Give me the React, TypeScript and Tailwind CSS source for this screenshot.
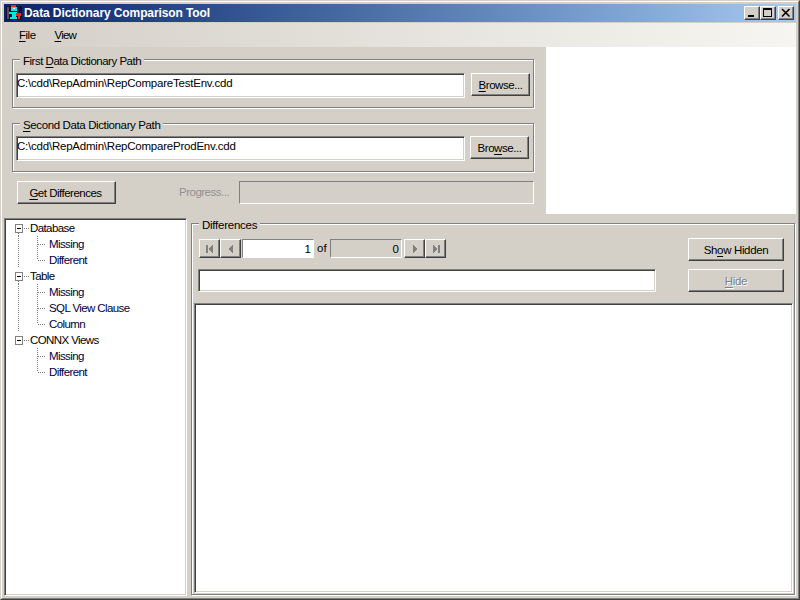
import React from "react";

const sunken = "border border-t-[#808080] border-l-[#808080] border-r-white border-b-white shadow-[inset_1px_1px_0_#404040,inset_-1px_-1px_0_#d4d0c8] bg-white";
const raised = "border border-t-white border-l-white border-r-[#404040] border-b-[#404040] shadow-[inset_-1px_-1px_0_#808080] bg-[#d4d0c8]";
const etchedFlat = "border border-t-[#808080] border-l-[#808080] border-r-white border-b-white bg-[#d4d0c8]";

function U({ children }: { children: React.ReactNode }) {
  return <span className="underline underline-offset-2">{children}</span>;
}

function Btn({ className, children, disabled }: { className: string; children: React.ReactNode; disabled?: boolean }) {
  return (
    <div className={`${raised} ${className} flex items-center justify-center ${disabled ? "text-[#808080] [text-shadow:1px_1px_0_#fff]" : "text-black"}`}>
      {children}
    </div>
  );
}

function Group({ className, label, children }: { className: string; label: React.ReactNode; children: React.ReactNode }) {
  return (
    <div className={`relative border border-[#808080] shadow-[1px_1px_0_#fff,inset_1px_1px_0_#fff] ${className}`}>
      <div className="absolute left-[7px] top-[-5px] bg-[#d4d0c8] px-[3px] h-[12px] leading-[12px] tracking-[-0.5px] whitespace-nowrap">{label}</div>
      {children}
    </div>
  );
}

function NavIcon({ kind }: { kind: "first" | "prev" | "next" | "last" }) {
  return (
    <svg width="10" height="10" viewBox="0 0 10 10" fill="#808080" shapeRendering="crispEdges">
      {kind === "first" && (<><rect x="1" y="1" width="2" height="8" /><path d="M8 1v8H7V8H6V7H5V6H4V4H5V3H6V2H7V1z" /></>)}
      {kind === "prev" && <path d="M7 1v8H6V8H5V7H4V6H3V4H4V3H5V2H6V1z" />}
      {kind === "next" && <path d="M3 1v8H4V8H5V7H6V6H7V4H6V3H5V2H4V1z" />}
      {kind === "last" && (<><rect x="7" y="1" width="2" height="8" /><path d="M2 1v8H3V8H4V7H5V6H6V4H5V3H4V2H3V1z" /></>)}
    </svg>
  );
}

function AppIcon() {
  return (
    <svg width="16" height="16" viewBox="0 0 16 16" shapeRendering="crispEdges" className="shrink-0">
      <rect x="0" y="1" width="16" height="14" fill="#101030" />
      <rect x="1" y="2" width="2" height="12" fill="#505060" />
      <rect x="5" y="0" width="5" height="2" fill="#ff2020" />
      <rect x="5" y="2" width="6" height="4" fill="#00e8e8" />
      <rect x="7" y="3" width="2" height="1" fill="#fff" />
      <rect x="3" y="7" width="8" height="2" fill="#00e8e8" />
      <rect x="6" y="9" width="4" height="3" fill="#00e8e8" />
      <rect x="4" y="12" width="7" height="2" fill="#00e8e8" />
      <rect x="10" y="8" width="5" height="3" fill="#ff2020" />
      <rect x="12" y="11" width="2" height="3" fill="#ff2020" />
    </svg>
  );
}

function RootRow({ label, line }: { label: string; line: boolean }) {
  return (
    <div className="flex h-4 items-center">
      <svg width="25" height="16" viewBox="0 0 25 16" className="shrink-0" shapeRendering="crispEdges">
        <rect x="10.5" y="4.5" width="7" height="8" fill="#fff" stroke="#808080" />
        <rect x="12" y="8" width="4" height="1" fill="#000" />
        <path d="M18.5 8.5H24" stroke="#808080" strokeDasharray="1 1" />
        {line && <path d="M13.5 13V16" stroke="#808080" strokeDasharray="1 1" />}
      </svg>
      <span className="leading-4 tracking-[-0.6px] whitespace-nowrap text-black">{label}</span>
    </div>
  );
}

function ChildRow({ label, last, outer }: { label: string; last: boolean; outer: boolean }) {
  return (
    <div className="flex h-4 items-center">
      <svg width="44" height="16" viewBox="0 0 44 16" className="shrink-0" shapeRendering="crispEdges">
        {outer && <path d="M13.5 0V16" stroke="#808080" strokeDasharray="1 1" />}
        <path d={last ? "M32.5 0V8" : "M32.5 0V16"} stroke="#808080" strokeDasharray="1 1" />
        <path d="M33 8.5H40" stroke="#808080" strokeDasharray="1 1" />
      </svg>
      <span className="leading-4 tracking-[-0.6px] whitespace-nowrap text-[#000040]">{label}</span>
    </div>
  );
}

export default function App() {
  return (
    <div className="w-[800px] h-[600px] overflow-hidden border border-t-[#d4d0c8] border-l-[#d4d0c8] border-r-[#404040] border-b-[#404040] bg-[#d4d0c8] text-[11.5px] text-black" style={{ fontFamily: '"Liberation Sans", Arial, sans-serif' }}>
      <div className="h-full border border-t-white border-l-white border-r-[#808080] border-b-[#808080] p-[2px] flex flex-col">
        {/* Title bar */}
        <div className="h-[18px] shrink-0 flex items-center pl-[2px] bg-gradient-to-r from-[#0a246a] to-[#a6caf0]">
          <AppIcon />
          <span className="ml-[2px] text-white font-bold text-[12px] tracking-[-0.1px] whitespace-nowrap">Data Dictionary Comparison Tool</span>
          <div className="ml-auto flex mr-[2px]">
            <Btn className="w-[16px] h-[14px]">
              <svg width="10" height="10" viewBox="0 0 10 10" shapeRendering="crispEdges"><rect x="1" y="7" width="6" height="2" fill="#000" /></svg>
            </Btn>
            <Btn className="w-[16px] h-[14px]">
              <svg width="10" height="10" viewBox="0 0 10 10" shapeRendering="crispEdges"><path d="M0 0H9V9H0z M1 2V8H8V2z" fillRule="evenodd" fill="#000" /></svg>
            </Btn>
            <Btn className="w-[16px] h-[14px] ml-[2px]">
              <svg width="10" height="10" viewBox="0 0 10 10"><path d="M1 1L8.5 8.5M8.5 1L1 8.5" stroke="#000" strokeWidth="1.6" fill="none" /></svg>
            </Btn>
          </div>
        </div>
        {/* Menu */}
        <div className="mt-[1px] h-[24px] pt-[1px] shrink-0 flex items-center pl-[15px] gap-[19px] bg-gradient-to-r from-[#d4d0c8] to-[#f6f5f1]">
          <span className="tracking-[-0.5px]"><U>F</U>ile</span>
          <span className="tracking-[-0.8px]"><U>V</U>iew</span>
        </div>
        {/* Top section */}
        <div className="h-[167px] shrink-0 flex">
          <div className="w-[542px] shrink-0 pl-[8px] pt-[12px]">
            <Group className="w-[522px] h-[49px] pl-[3px] pt-[13px]" label={<>First <U>D</U>ata Dictionary Path</>}>
              <div className="flex items-start">
                <div className={`${sunken} w-[449px] h-[25px] pt-[2px] leading-[15px] tracking-[-0.22px]`}>C:\cdd\RepAdmin\RepCompareTestEnv.cdd</div>
                <Btn className="w-[59px] h-[23px] pt-[2px] ml-[6px] tracking-[-0.45px]"><span><U>B</U>rowse...</span></Btn>
              </div>
            </Group>
            <Group className="w-[522px] h-[49px] mt-[15px] pl-[3px] pt-[12px]" label={<span className="tracking-[-0.38px]"><U>S</U>econd Data Dictionary Path</span>}>
              <div className="flex items-start">
                <div className={`${sunken} w-[449px] h-[25px] pt-[2px] leading-[15px] tracking-[-0.22px]`}>C:\cdd\RepAdmin\RepCompareProdEnv.cdd</div>
                <Btn className="w-[59px] h-[23px] pt-[2px] ml-[5px] tracking-[-0.45px]"><span>Bro<U>w</U>se...</span></Btn>
              </div>
            </Group>
            <div className="flex items-center mt-[9px]">
              <Btn className="w-[99px] h-[23px] pt-[2px] pr-[2px] ml-[5px] tracking-[-0.5px]"><span><U>G</U>et Differences</span></Btn>
              <span className="ml-[63px] pt-[1px] text-[#919191] tracking-[-0.5px]">Progress...</span>
              <div className={`${etchedFlat} ml-[10px] w-[295px] h-[23px]`} />
            </div>
          </div>
          <div className="flex-1 bg-white" />
        </div>
        {/* Bottom section */}
        <div className="mt-[4px] flex-1 min-h-0 flex">
          <div className={`${sunken} w-[183px] pt-[1px]`}>
            <RootRow label="Database" line />
            <ChildRow label="Missing" last={false} outer />
            <ChildRow label="Different" last outer />
            <RootRow label="Table" line />
            <ChildRow label="Missing" last={false} outer />
            <ChildRow label="SQL View Clause" last={false} outer />
            <ChildRow label="Column" last outer />
            <RootRow label="CONNX Views" line={false} />
            <ChildRow label="Missing" last={false} outer={false} />
            <ChildRow label="Different" last outer={false} />
          </div>
          <div className="flex-1 min-w-0 pl-[4px] pt-[5px]">
            <Group className="h-[372px] w-[604px] pl-[2px] pt-[15px]" label={<span className="tracking-[-0.25px]">Differences</span>}>
              <div className="flex">
                <div className="flex-1 pl-[5px]">
                  <div className="flex items-center h-[19px]">
                    <Btn className="w-[21px] h-[19px]"><NavIcon kind="first" /></Btn>
                    <Btn className="w-[21px] h-[19px]"><NavIcon kind="prev" /></Btn>
                    <div className={`${etchedFlat} !bg-white ml-[1px] w-[72px] h-[19px] text-right pr-[2px] leading-[19px]`}>1</div>
                    <span className="ml-[3px] w-[13px] pt-[1px]">of</span>
                    <div className={`${etchedFlat} w-[72px] h-[19px] text-right pr-[2px] leading-[19px]`}>0</div>
                    <Btn className="w-[21px] h-[19px] ml-[2px]"><NavIcon kind="next" /></Btn>
                    <Btn className="w-[21px] h-[19px]"><NavIcon kind="last" /></Btn>
                  </div>
                  <div className={`${sunken} w-[458px] h-[23px] mt-[11px] -ml-[1px]`} />
                </div>
                <div className="w-[96px] mr-[10px] -mt-[1px]">
                  <Btn className="w-[96px] h-[23px] pt-[2px] tracking-[-0.35px]"><span>Sh<U>o</U>w Hidden</span></Btn>
                  <Btn className="w-[96px] h-[23px] pt-[2px] mt-[8px] tracking-[-0.35px]" disabled><span><U>H</U>ide</span></Btn>
                </div>
              </div>
              <div className={`${sunken} w-[599px] h-[290px] mt-[11px]`} />
            </Group>
          </div>
        </div>
      </div>
    </div>
  );
}
